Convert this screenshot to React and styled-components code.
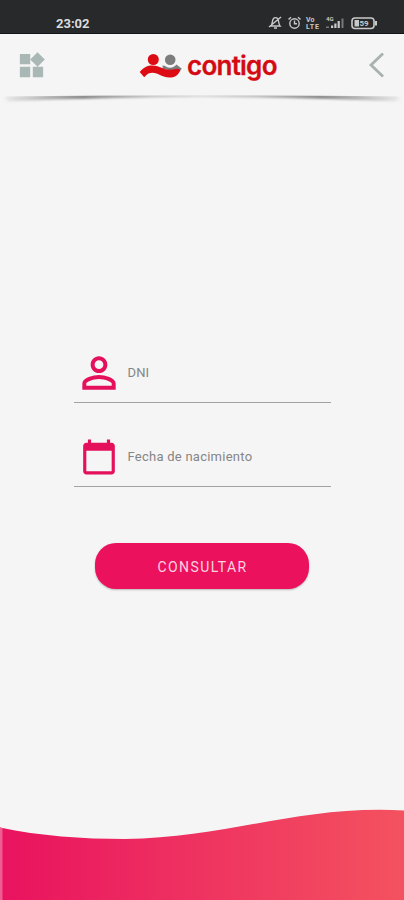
import React from "react";
import styled, { createGlobalStyle } from "styled-components";

const GlobalStyle = createGlobalStyle`
  * { box-sizing: border-box; }
  body { margin: 0; background: #f5f5f5; font-family: Roboto, "Liberation Sans", sans-serif; }
`;

const Screen = styled.div`
  width: 404px;
  height: 900px;
  display: flex;
  flex-direction: column;
  background: #f5f5f5;
  overflow: hidden;
`;

const StatusBar = styled.div`
  flex: none;
  height: 34px;
  padding: 11px 26px 0 56px;
  display: flex;
  justify-content: space-between;
  align-items: flex-start;
  background: #28292b;
  border-bottom: 1px solid #131415;
`;

const Clock = styled.span`
  font-size: 13px;
  line-height: 25px;
  height: 22px;
  font-weight: 700;
  color: #dcdcdc;
`;

const StatusIcons = styled.svg`
  display: block;
  width: 112px;
  height: 20px;
`;

const Header = styled.header`
  flex: none;
  height: 60px;
  padding: 4px 16px 0;
  display: flex;
  justify-content: space-between;
  align-items: center;
`;

const IconButton = styled.button`
  display: flex;
  width: 34px;
  height: 32px;
  padding: 0;
  border: 0;
  background: none;
  color: ${(p) => p.$color};
`;

const Brand = styled.div`
  display: flex;
  align-items: center;
  gap: 5px;
  padding: 0 0 0 12px;
`;

const BrandName = styled.span`
  font-family: Inter, "Liberation Sans", sans-serif;
  font-size: 26px;
  line-height: 32px;
  font-weight: 600;
  letter-spacing: -0.75px;
  color: #d40a12;
  width: 90px;
  -webkit-text-stroke: 0.3px #d40a12;
`;

const Shadow = styled.svg`
  display: block;
  flex: none;
  width: 404px;
  height: 14px;
`;

const Form = styled.form`
  flex: 1;
  display: flex;
  flex-direction: column;
  align-items: center;
  padding-top: 237px;
`;

const Field = styled.label`
  display: flex;
  align-items: center;
  width: 257px;
  height: 58px;
  margin: 0 0 26px 1px;
  padding-bottom: 1px;
  border-bottom: 1px solid #a2a2a2;
`;

const FieldIcon = styled.span`
  display: flex;
  flex: none;
  justify-content: center;
  width: 50px;
  margin-right: 3.5px;
  color: #e5105c;
`;

const Placeholder = styled.span`
  font-size: 13px;
  line-height: 20px;
  letter-spacing: ${(p) => p.$spacing};
  color: #858585;
`;

const Submit = styled.button`
  width: 214px;
  height: 46px;
  margin-top: 29.5px;
  padding: 2px 0 0 1px;
  border: 0;
  border-radius: 21px;
  background: #eb115d;
  box-shadow: 0 1px 2px rgba(0, 0, 0, 0.25);
  font-family: Roboto, sans-serif;
  font-size: 14px;
  font-weight: 400;
  letter-spacing: 1.4px;
  color: #fbd3e0;
`;

const Wave = styled.svg`
  display: block;
  flex: none;
  width: 404px;
  height: 92px;
`;

const Glyph = ({ size, d }) => (
  <svg width={size} height={size} viewBox="0 0 24 24" fill="currentColor">
    <path d={d} />
  </svg>
);

const WIDGETS =
  "M13 13v8h8v-8h-8zM3 21h8v-8H3v8zM3 3v8h8V3H3zm13.66-1.31L11 7.34 16.66 13l5.66-5.66-5.66-5.65z";
const PERSON =
  "M12 5.9a2.1 2.1 0 1 1 0 4.2 2.1 2.1 0 0 1 0-4.2m0 9c2.97 0 6.1 1.46 6.1 2.1v1.1H5.900V17c0-.64 3.130-2.1 6.100-2.1M12 4C9.790 4 8 5.790 8 8s1.790 4 4 4 4-1.790 4-4-1.790-4-4-4zm0 9c-2.670 0-8 1.340-8 4v3h16v-3c0-2.660-5.330-4-8-4z";
const CALENDAR =
  "M20 3h-1V1h-2v2H7V1H5v2H4c-1.1 0-2 .9-2 2v16c0 1.1.9 2 2 2h16c1.1 0 2-.9 2-2V5c0-1.1-.9-2-2-2zm0 18H4V8h16v13z";

const PhoneStatus = () => (
  <StatusIcons viewBox="266 11 112 20" fill="none" stroke="#c9c9c9" strokeWidth="1.4">
    <path d="M271 26c1.500-1.500 1-6 2.500-7.500 1-1.200 3-1.200 4 0 1.500 1.500 1 6 2.500 7.500zM274 28h3M269 27l12-10" />
    <circle cx="294.500" cy="23.500" r="4.700" />
    <path d="M294.500 20.500v3.300h2.500M288.500 19.500l2.500-2.300M300.500 19.500l-2.500-2.300" />
    <g fill="#c9c9c9" stroke="none" fontFamily="Roboto, sans-serif" fontWeight="700">
      <text x="306" y="22" fontSize="7">Vo</text>
      <text x="306" y="29" fontSize="7" textLength="13">LTE</text>
      <text x="326" y="21" fontSize="6">4G</text>
      <path d="M331 25.500h2.200v2.500h-2.200zM334.300 23.500h2.200v4.500h-2.200zM337.600 21h2.200v7h-2.200z" />
      <path d="M341.500 18.500h2v9.500h-2zM326 26.500h3v1.500h-3z" opacity=".5" />
    </g>
    <rect x="352" y="18" width="22" height="10.500" rx="3" strokeWidth="1.600" />
    <path d="M354.500 20h4.500v6.500h-4.500z" fill="#c9c9c9" stroke="none" />
    <path d="M376 21v4.500" strokeWidth="2" />
    <text x="359.500" y="26.200" fontSize="8" fontWeight="700" fontFamily="Roboto, sans-serif" fill="#c9c9c9" stroke="none">59</text>
  </StatusIcons>
);

const BrandMark = () => (
  <svg width="43" height="26" viewBox="139 54 43 26">
    <circle cx="170.200" cy="60.700" r="5.300" fill="#7d7d7d" />
    <path d="M162.500 66.500c3 0 4.500 2.300 7.500 2.300s4.800-1.600 6.500-3.300l5.300 4.300-3 3.500-16-3.500z" fill="#7d7d7d" />
    <circle cx="153.300" cy="60.500" r="5.500" fill="#dc0b14" />
    <path d="M139.700 73c4-5 8.300-6.800 13-6.600 7 .2 10.500 4.300 17.500 4.300 3.300 0 5.500-1.100 7.300-1 1.500.1 2.700.8 2.800 1.500-2.200 5.300-6 7.300-10.800 7.300-7.500 0-11-4.800-17-4.800-3.600 0-5.600 1.200-8.300 4.600z" fill="#dc0b14" />
  </svg>
);

export default function App() {
  return (
    <>
      <GlobalStyle />
      <Screen>
        <StatusBar>
          <Clock>23:02</Clock>
          <PhoneStatus />
        </StatusBar>
        <Header>
          <IconButton type="button" aria-label="Menú" $color="#a9b8b5">
            <Glyph size={31} d={WIDGETS} />
          </IconButton>
          <Brand>
            <BrandMark />
            <BrandName>contigo</BrandName>
          </Brand>
          <IconButton type="button" aria-label="Volver" $color="#a9b2b1">
            <svg width="34" height="32" viewBox="0 0 34 32" fill="none" stroke="currentColor" strokeWidth="2.800">
              <path d="M29 3.500L17 15 29 26.500" />
            </svg>
          </IconButton>
        </Header>
        <Shadow viewBox="0 94 404 14">
          <defs>
            <linearGradient id="edge">
              <stop offset="0" stopColor="#777" stopOpacity=".1" />
              <stop offset=".2" stopColor="#666" stopOpacity=".8" />
              <stop offset=".5" stopColor="#999" stopOpacity=".35" />
              <stop offset=".8" stopColor="#666" stopOpacity=".8" />
              <stop offset="1" stopColor="#777" stopOpacity=".1" />
            </linearGradient>
            <filter id="soft" x="-5%" y="-100%" width="110%" height="300%">
              <feGaussianBlur stdDeviation="2 .9" />
            </filter>
            <clipPath id="below">
              <path d="M0 96.500Q202 94 404 96.500V108H0z" />
            </clipPath>
          </defs>
          <g clipPath="url(#below)">
            <path d="M5 95H399L397 101.500Q202 92.500 7 101.500z" fill="url(#edge)" filter="url(#soft)" />
          </g>
        </Shadow>
        <Form>
          <Field>
            <FieldIcon>
              <Glyph size={50} d={PERSON} />
            </FieldIcon>
            <Placeholder $spacing="0.1px">DNI</Placeholder>
          </Field>
          <Field>
            <FieldIcon>
              <Glyph size={38} d={CALENDAR} />
            </FieldIcon>
            <Placeholder $spacing="0.25px">Fecha de nacimiento</Placeholder>
          </Field>
          <Submit type="button">CONSULTAR</Submit>
        </Form>
        <Wave viewBox="0 808 404 92">
          <defs>
            <linearGradient id="pink">
              <stop offset="0" stopColor="#e9125f" />
              <stop offset=".45" stopColor="#ee3060" />
              <stop offset="1" stopColor="#f4525f" />
            </linearGradient>
          </defs>
          <path d="M0 827.500C40 836 82 839 125 839C220 838 290 809.500 380 809.700Q392 809.700 404 810.500V900H0z" fill="url(#pink)" />
          <path d="M0 827.500l2.500.5V900H0z" fill="#ee5c91" />
        </Wave>
      </Screen>
    </>
  );
}
